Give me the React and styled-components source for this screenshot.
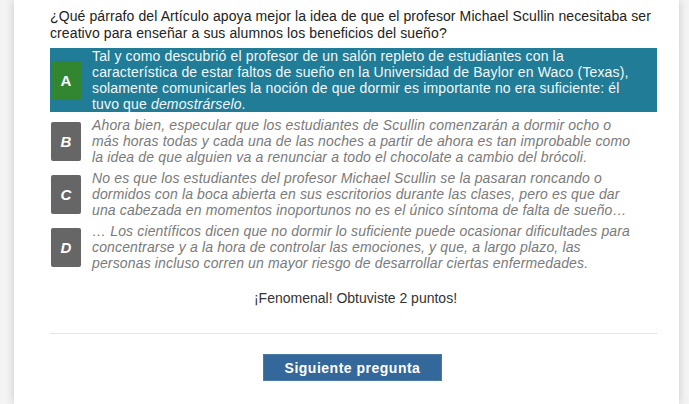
import React from "react";
import styled, { createGlobalStyle } from "styled-components";

const Global = createGlobalStyle`
  html, body { margin: 0; padding: 0; background: #f4f4f4; height: 100%; overflow: hidden; }
  body { font-family: "Liberation Sans", Arial, sans-serif; }
`;

const Page = styled.div`
  height: 404px;
  padding-left: 14px;
  width: 665px;
`;

const Card = styled.div`
  background: #fff;
  height: 100%;
  box-shadow: 0 0 9px rgba(0, 0, 0, 0.18);
  padding: 8px 22px 0 36px;
  box-sizing: border-box;
`;

const Question = styled.p`
  margin: 0 0 6px;
  font-size: 14px;
  line-height: 17px;
  letter-spacing: 0.1px;
  color: #222;
`;

const Options = styled.div`
  display: flex;
  flex-direction: column;
  gap: 5px;
`;

const Option = styled.div`
  display: flex;
  align-items: center;
  gap: 11px;
  padding-left: 1px;
  background: ${(p) => (p.$selected ? "#217c98" : "transparent")};
  color: ${(p) => (p.$selected ? "#f2f8fa" : "#7a7a7a")};
  font-style: ${(p) => (p.$selected ? "normal" : "italic")};
`;

const Letter = styled.div`
  flex: 0 0 30px;
  height: 39px;
  display: flex;
  align-items: center;
  justify-content: center;
  border-radius: ${(p) => (p.$selected ? "0" : "2px")};
  background: ${(p) => (p.$selected ? "#32862f" : "#666")};
  color: #fff;
  font-weight: bold;
  font-size: 15px;
  font-style: ${(p) => (p.$selected ? "normal" : "italic")};
`;

const OptionText = styled.div`
  font-size: 14px;
  line-height: 16px;
  letter-spacing: 0.15px;
  padding-right: 20px;
`;

const Result = styled.p`
  margin: 19px 0 0;
  text-align: center;
  font-size: 14px;
  line-height: 16px;
  color: #333;
  padding-left: 4px;
`;

const Divider = styled.hr`
  border: 0;
  border-top: 1px solid #e6e6e6;
  margin: 27px 0 0;
`;

const ButtonRow = styled.div`
  display: flex;
  justify-content: center;
  padding-top: 20px;
`;

const NextButton = styled.button`
  width: 179px;
  height: 27px;
  background: #34679a;
  border: 1px solid #4a7aa8;
  color: #fff;
  font-family: "Liberation Sans", Arial, sans-serif;
  font-weight: bold;
  font-size: 14px;
  letter-spacing: 0.5px;
  margin-left: -2px;
`;

const options = [
  {
    l: "A",
    sel: true,
    t: (
      <>
        Tal y como descubrió el profesor de un salón repleto de estudiantes con la
        característica de estar faltos de sueño en la Universidad de Baylor en Waco (Texas),
        solamente comunicarles la noción de que dormir es importante no era suficiente: él
        tuvo que <i>demostrárselo</i>.
      </>
    ),
  },
  {
    l: "B",
    t: "Ahora bien, especular que los estudiantes de Scullin comenzarán a dormir ocho o más horas todas y cada una de las noches a partir de ahora es tan improbable como la idea de que alguien va a renunciar a todo el chocolate a cambio del brócoli.",
  },
  {
    l: "C",
    t: "No es que los estudiantes del profesor Michael Scullin se la pasaran roncando o dormidos con la boca abierta en sus escritorios durante las clases, pero es que dar una cabezada en momentos inoportunos no es el único síntoma de falta de sueño…",
  },
  {
    l: "D",
    t: "… Los científicos dicen que no dormir lo suficiente puede ocasionar dificultades para concentrarse y a la hora de controlar las emociones, y que, a largo plazo, las personas incluso corren un mayor riesgo de desarrollar ciertas enfermedades.",
  },
];

export default function App() {
  return (
    <Page>
      <Global />
      <Card>
        <Question>
          ¿Qué párrafo del Artículo apoya mejor la idea de que el profesor Michael Scullin necesitaba ser
          creativo para enseñar a sus alumnos los beneficios del sueño?
        </Question>
        <Options>
          {options.map((o) => (
            <Option key={o.l} $selected={o.sel}>
              <Letter $selected={o.sel}>{o.l}</Letter>
              <OptionText>{o.t}</OptionText>
            </Option>
          ))}
        </Options>
        <Result>¡Fenomenal! Obtuviste 2 puntos!</Result>
        <Divider />
        <ButtonRow>
          <NextButton>Siguiente pregunta</NextButton>
        </ButtonRow>
      </Card>
    </Page>
  );
}
